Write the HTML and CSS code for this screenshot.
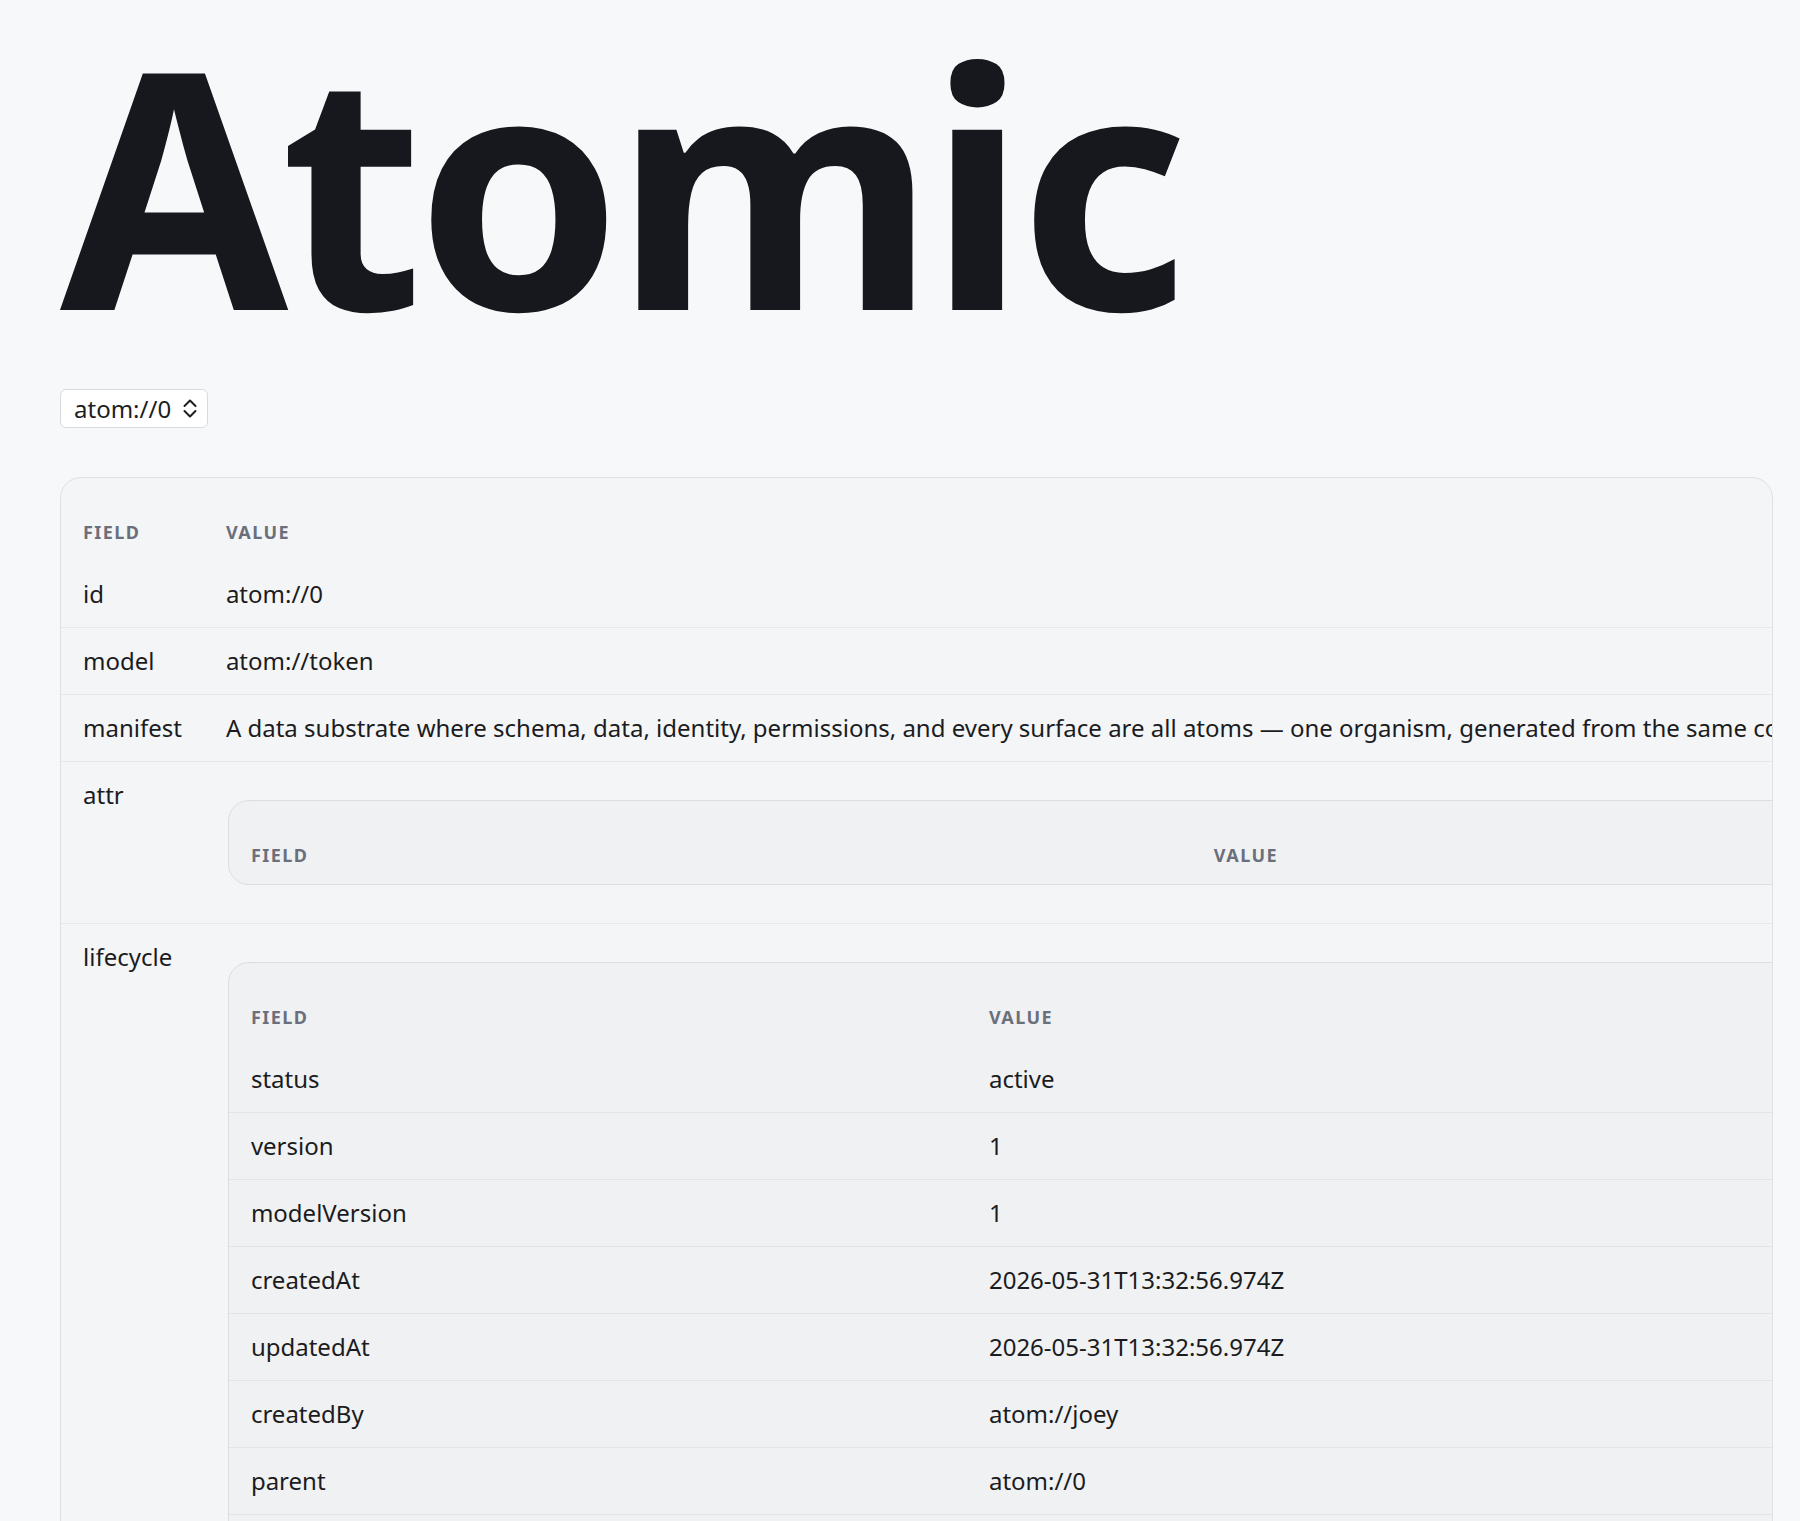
FILE: index.html
```html
<!DOCTYPE html>
<html lang="en">
<head>
<meta charset="utf-8">
<title>Atomic</title>
<link rel="stylesheet" href="styles.css">
</head>
<body>
<main class="page">
  <h1 class="title">Atomic</h1>
  <div class="select">
    <span class="select-value">atom://0</span>
    <svg class="select-arrow" width="14" height="19" viewBox="0 0 14 19" aria-hidden="true">
      <path d="M1.5 7 L7 1.5 L12.5 7" fill="none" stroke="#1d1e23" stroke-width="2" stroke-linecap="round" stroke-linejoin="round"/>
      <path d="M1.5 12 L7 17.5 L12.5 12" fill="none" stroke="#1d1e23" stroke-width="2" stroke-linecap="round" stroke-linejoin="round"/>
    </svg>
  </div>

  <div class="card">
    <table class="kv">
      <thead>
        <tr><th>Field</th><th>Value</th></tr>
      </thead>
      <tbody>
        <tr><td class="k">id</td><td class="v">atom://0</td></tr>
        <tr><td class="k">model</td><td class="v">atom://token</td></tr>
        <tr><td class="k">manifest</td><td class="v">A data substrate where schema, data, identity, permissions, and every surface are all atoms — one organism, generated from the same contract, and is rendered by one runtime.</td></tr>
        <tr>
          <td class="k">attr</td>
          <td class="v">
            <div class="card nested">
              <table class="kv full">
                <thead><tr><th>Field</th><th>Value</th></tr></thead>
                <tbody></tbody>
              </table>
            </div>
          </td>
        </tr>
        <tr>
          <td class="k">lifecycle</td>
          <td class="v">
            <div class="card nested">
              <table class="kv full">
                <thead><tr><th>Field</th><th>Value</th></tr></thead>
                <tbody>
                  <tr><td class="k">status</td><td class="v">active</td></tr>
                  <tr><td class="k">version</td><td class="v">1</td></tr>
                  <tr><td class="k">modelVersion</td><td class="v">1</td></tr>
                  <tr><td class="k">createdAt</td><td class="v">2026-05-31T13:32:56.974Z</td></tr>
                  <tr><td class="k">updatedAt</td><td class="v">2026-05-31T13:32:56.974Z</td></tr>
                  <tr><td class="k">createdBy</td><td class="v">atom://joey</td></tr>
                  <tr><td class="k">parent</td><td class="v">atom://0</td></tr>
                  <tr><td class="k">owner</td><td class="v">atom://joey</td></tr>
                </tbody>
              </table>
            </div>
          </td>
        </tr>
      </tbody>
    </table>
  </div>
</main>
</body>
</html>
```

FILE: styles.css
```css
html, body {
  margin: 0;
  padding: 0;
  background: #f7f8fa;
}

body {
  font-family: "Noto Sans", "DejaVu Sans", sans-serif;
  color: #1b1c21;
  font-size: 24px;
  line-height: 1.5;
}

.page {
  padding: 17px 27px 40px 60px;
}

.title {
  margin: 0;
  font-size: 330px;
  line-height: 1;
  font-weight: 700;
  color: #17181d;
  letter-spacing: -0.024em;
}

.select {
  margin-top: 42px;
  display: inline-flex;
  align-items: center;
  gap: 12px;
  height: 39px;
  box-sizing: border-box;
  padding: 0 10px 0 13px;
  background: #ffffff;
  border: 1px solid #d9dae0;
  border-radius: 6px;
  font-size: 24px;
  line-height: 28px;
  color: #1d1e23;
}

.select-value {
  display: block;
}

.select-arrow {
  display: block;
}

.card {
  margin-top: 49px;
  background: #f4f5f7;
  border: 1px solid #dfe0e4;
  border-radius: 21px;
  overflow: hidden;
}

.card.nested {
  margin: 23px 0 23px 2px;
  background: #f0f1f3;
  border-color: #dcdde1;
}

.kv {
  border-collapse: collapse;
  border-spacing: 0;
}

.kv.full {
  width: 100%;
}

.kv th {
  text-align: left;
  font-size: 18px;
  line-height: 27px;
  font-weight: 700;
  text-transform: uppercase;
  letter-spacing: 0.08em;
  color: #6b6f7b;
  padding: 41px 22px 15px 22px;
  white-space: nowrap;
}

.kv td {
  padding: 15px 22px;
  line-height: 36px;
  vertical-align: top;
  white-space: nowrap;
}

.kv > tbody > tr {
  border-bottom: 1px solid #e7e8eb;
}

.kv.full > tbody > tr {
  border-bottom: 1px solid #e3e4e7;
}
```
